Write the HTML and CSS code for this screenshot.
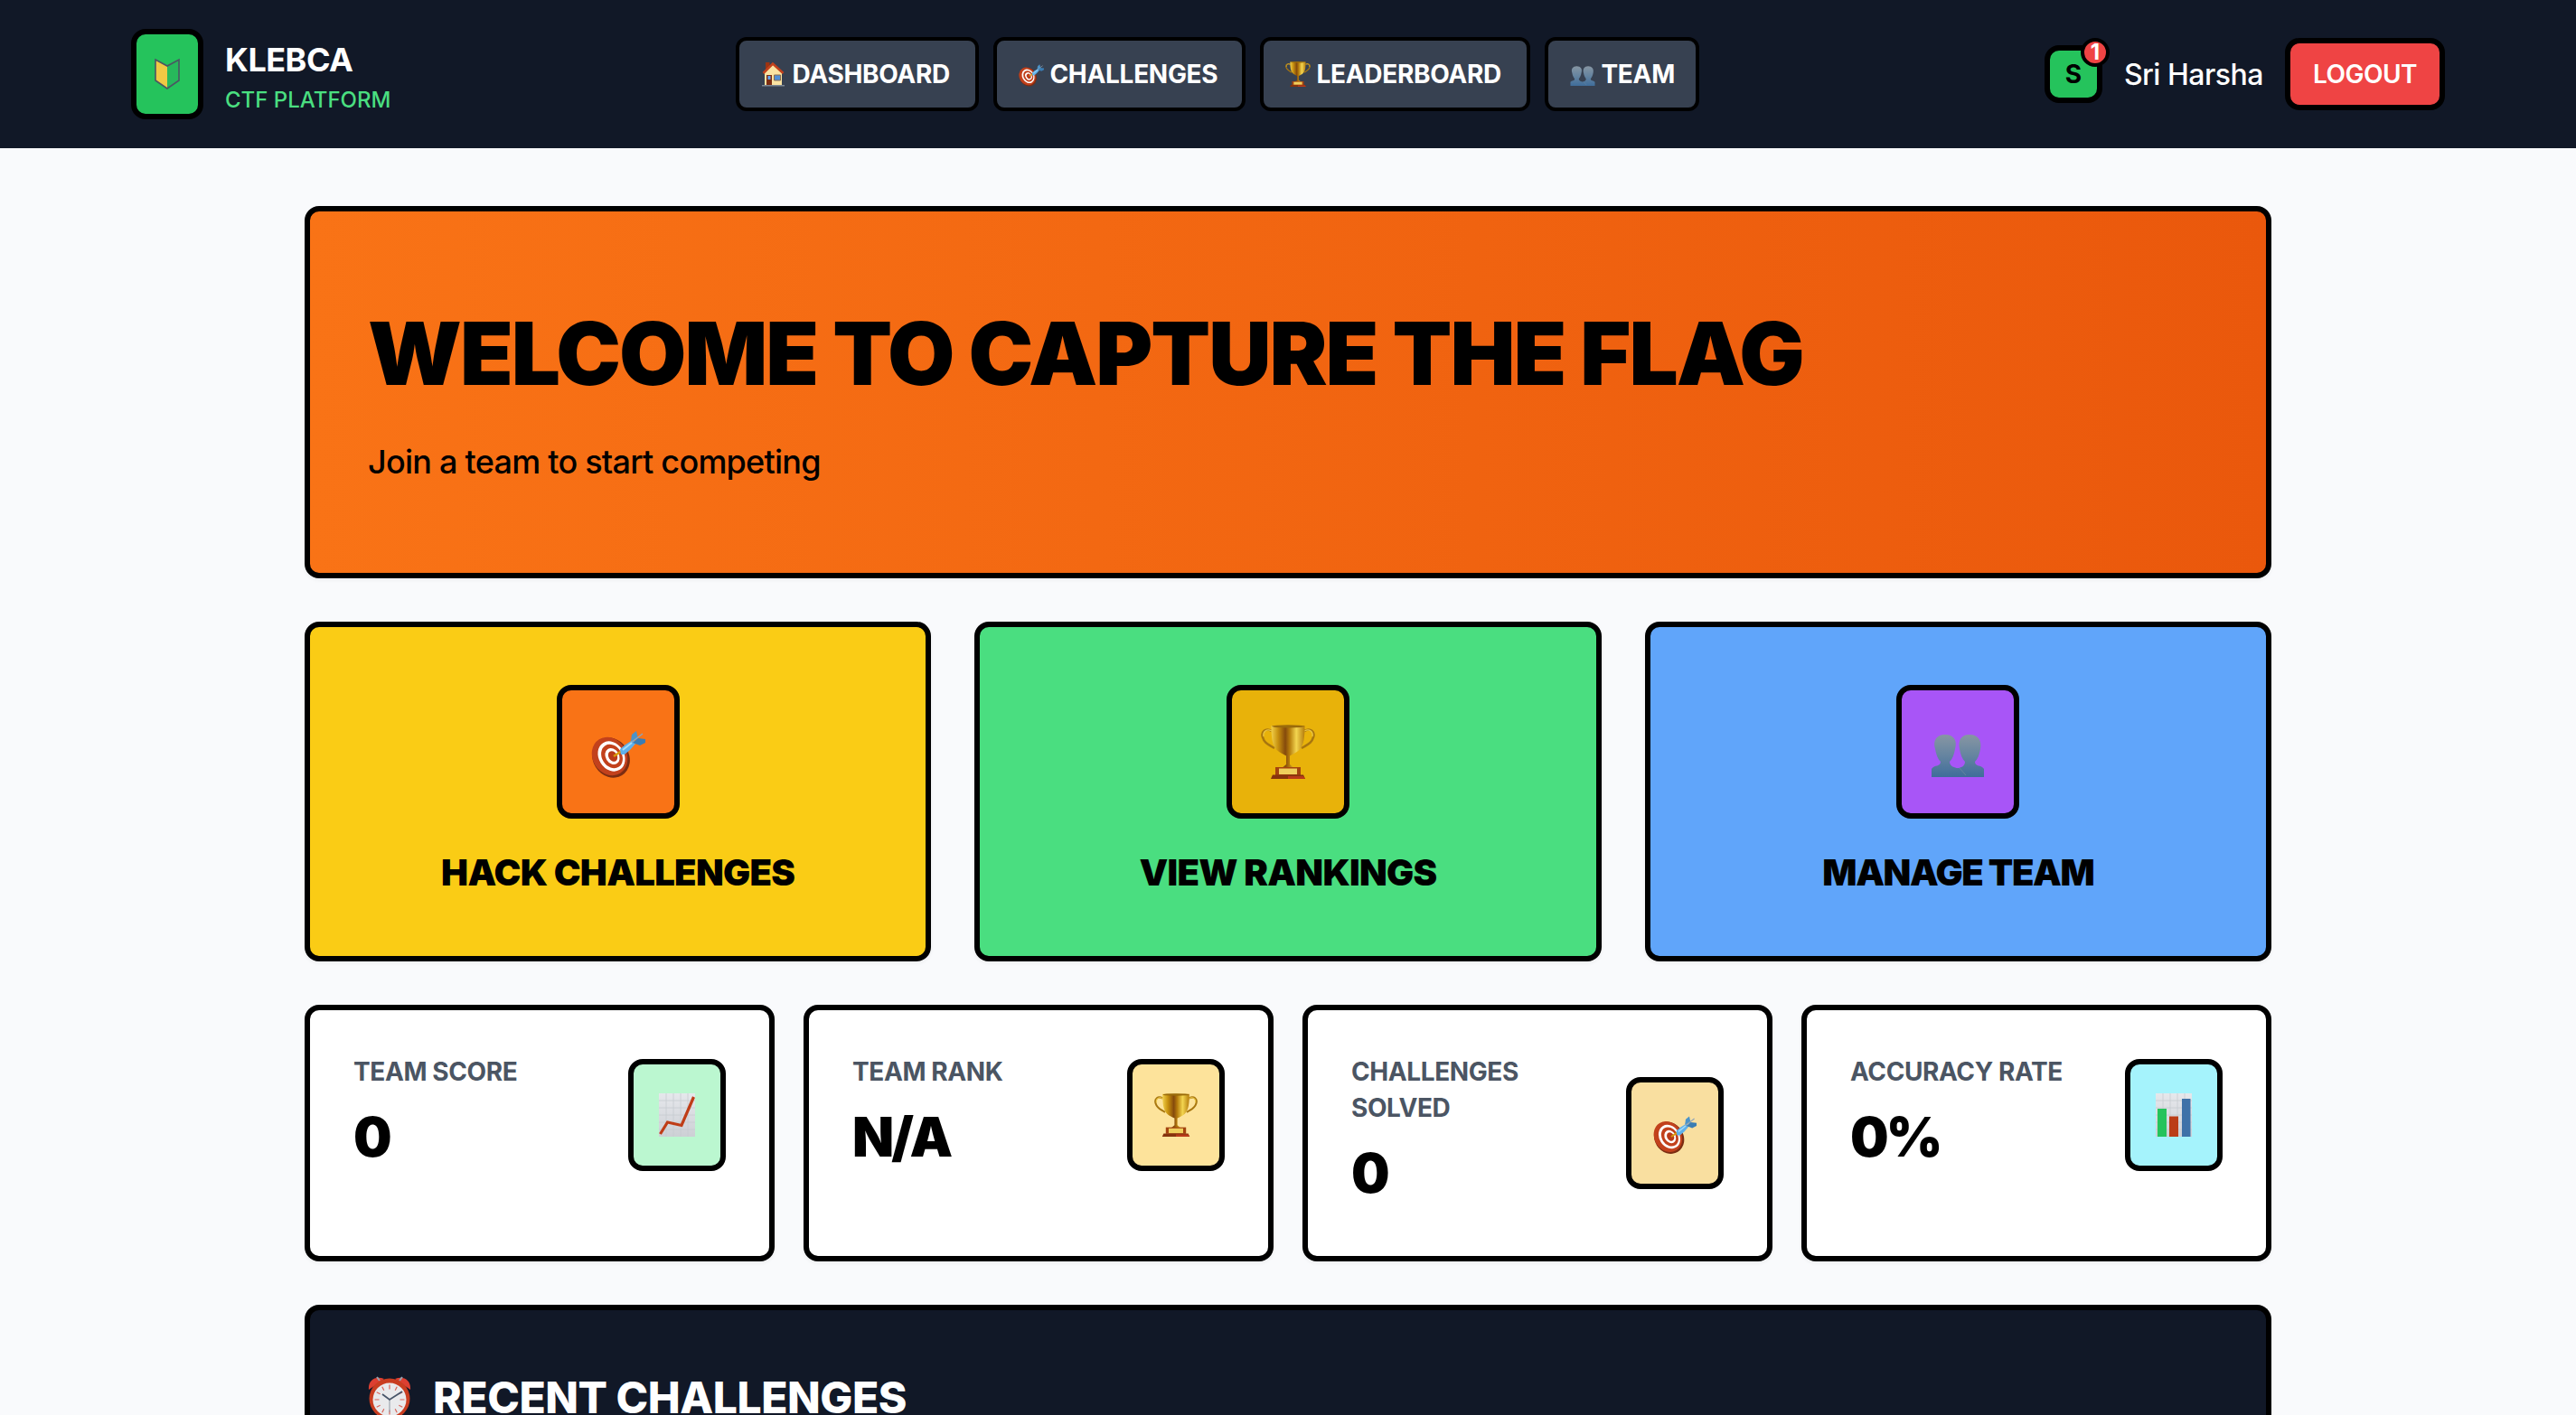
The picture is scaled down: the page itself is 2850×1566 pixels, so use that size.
FILE: index.html
```html
<!DOCTYPE html>
<html lang="en">
<head>
  <meta charset="UTF-8" />
  <meta name="viewport" content="width=device-width, initial-scale=1.0"/>
  <title>KLEBCA CTF Platform</title>
  <link rel="stylesheet" href="styles.css">
</head>
<body>

  <!-- shared icons -->
  <svg class="sprite" width="0" height="0">
    <defs>
      <linearGradient id="gold" x1="0" x2="1" y1="0" y2="0">
        <stop offset="0" stop-color="#f0cf4a"/>
        <stop offset="0.2" stop-color="#c8920f"/>
        <stop offset="0.42" stop-color="#854a0c"/>
        <stop offset="0.55" stop-color="#b57c0c"/>
        <stop offset="0.75" stop-color="#f3d550"/>
        <stop offset="1" stop-color="#b57c0c"/>
      </linearGradient>
      <linearGradient id="steel" x1="0" x2="0" y1="0" y2="1">
        <stop offset="0" stop-color="#8796a3"/>
        <stop offset="0.5" stop-color="#6584a0"/>
        <stop offset="1" stop-color="#3f6d9b"/>
      </linearGradient>
      <linearGradient id="paper" x1="0" x2="0" y1="0" y2="1">
        <stop offset="0" stop-color="#e6e8ec"/>
        <stop offset="1" stop-color="#cdd0d5"/>
      </linearGradient>
    </defs>

    <symbol id="target" viewBox="0 0 60 60">
      <ellipse cx="22" cy="36.500" rx="20" ry="23" transform="rotate(-32 22 36.500)" fill="#7c2d12"/>
      <ellipse cx="20.500" cy="35" rx="18.800" ry="22" transform="rotate(-32 20.500 35)" fill="#c2411c"/>
      <ellipse cx="22.500" cy="35" rx="14" ry="17.500" transform="rotate(-32 22.500 35)" fill="#fff"/>
      <ellipse cx="23" cy="35" rx="11" ry="14" transform="rotate(-32 23 35)" fill="#c2411c"/>
      <ellipse cx="23.500" cy="35" rx="7.500" ry="9.500" transform="rotate(-32 23.500 35)" fill="#fff"/>
      <ellipse cx="24" cy="35" rx="4.700" ry="6.200" transform="rotate(-32 24 35)" fill="#b93a1a"/>
      <path d="M25 35l9-6" stroke="#d99a0b" stroke-width="2.500"/>
      <path d="M32 27l6-5 8-5 4 3-7 8-6 5-4 0z" fill="#5fb0ea"/>
      <path d="M44 18l1-7 5-4 2 9z" fill="#4a93c9"/>
      <path d="M46 20l6-5 8 1 0 4-6 3z" fill="#3b7db3"/>
      <path d="M44 20L57 10" stroke="#8ea4b8" stroke-width="1.500"/>
      <path d="M35 28l10-8" stroke="#a5dcf8" stroke-width="1.800"/>
    </symbol>

    <symbol id="trophy" viewBox="0 0 60 60">
      <path d="M12 7C5 3 0 8 2 14c2 7 7 8 13 12M48 7c7-4 12 1 10 7-2 7-7 8-13 12" fill="none" stroke="#a8760f" stroke-width="2.600"/>
      <path d="M12 7C6 4 2 8 3 13M48 7c6-3 10 1 9 6" fill="none" stroke="#ecc846" stroke-width="1.300"/>
      <path d="M11.500 1h37c0 13-1 22-6 27-3 3-8 5-10.500 6.500V44l5 4H23l5-4v-9.500C25.500 33 20.500 31 17.500 28c-5-5-6-14-6-27z" fill="url(#gold)"/>
      <ellipse cx="30" cy="1.800" rx="18" ry="1.600" fill="#9a6b0b"/>
      <path d="M16 47h28v9H16z" fill="#a4430f"/>
      <path d="M20 48.500h20v6.500H20z" fill="#efcf5c"/>
      <path d="M13 55.500h34l2 4.500H11z" fill="#86330d"/>
      <path d="M30 57h17l2 3H30z" fill="#b93a1a"/>
    </symbol>

    <symbol id="people" viewBox="0 0 60 60">
      <path d="M1 58V49c3-5 10-2 10-8-3-3-5-8-6-14C2 17 7 11 16 11s14 6 11 16c-1 6-3 11-6 14 0 5 6 7 9 7s8-2 8-7c-3-3-5-8-6-14-2-10 2-16 11-16s14 6 12 16c-1 6-3 11-6 14 0 6 7 3 10 8v9z" fill="url(#steel)"/>
      <path d="M32 48l7 8" stroke="#6584a0" stroke-width="1"/>
    </symbol>

    <symbol id="beginner" viewBox="0 0 28 36">
      <path d="M1 2l13 7v25L1 25z" fill="#f0c944"/>
      <path d="M27 2L14 9v25l13-9z" fill="#27b85b"/>
      <path d="M1 2l13 7 13-7v23l-13 9-13-9z" fill="none" stroke="#4b5563" stroke-width="1.600"/>
    </symbol>

    <symbol id="house" viewBox="0 0 26 28">
      <path d="M4 1h4.500v7H4z" fill="#9c3412"/>
      <path d="M3 12L12 3l10 9v15H3z" fill="#fae3a2"/>
      <path d="M1.500 13L12 2.500 23.500 13" fill="none" stroke="#c2411c" stroke-width="2.600"/>
      <path d="M5 15h6v11H5z" fill="#7c2d12"/>
      <path d="M6.500 16h3v4h-3z" fill="#60a5fa"/>
      <path d="M13.500 15h7v6h-7z" fill="#4f8fd6" stroke="#8a6b4c" stroke-width="1"/>
      <path d="M0 26h25v1.500H0z" fill="#7c8794"/>
    </symbol>

    <symbol id="growth" viewBox="0 0 40 48">
      <path d="M0 0h40v48H0z" fill="url(#paper)"/>
      <path d="M0 8h40M0 16h40M0 24h40M0 32h40M0 40h40M8 0v48M16 0v48M24 0v48M32 0v48" stroke="#c7cbd1" stroke-width="0.800"/>
      <path d="M1.500 45L9.500 32 25 35.500 38.500 4" fill="none" stroke="#bf3d17" stroke-width="3.200"/>
    </symbol>

    <symbol id="bars" viewBox="0 0 40 48">
      <path d="M0 0h40v48H0z" fill="url(#paper)"/>
      <path d="M0 8h40M0 16h40M0 24h40M0 32h40M0 40h40M8 0v48M16 0v48M24 0v48M32 0v48" stroke="#c7cbd1" stroke-width="0.800"/>
      <path d="M2 17h10v31H2z" fill="#25c35c"/>
      <path d="M15 25.500h10V48H15z" fill="#bb3d17"/>
      <path d="M29 6h9.500v42H29z" fill="#3e71a8"/>
    </symbol>

    <symbol id="clock" viewBox="0 0 48 48">
      <path d="M9 47l4-6M39 47l-4-6" stroke="#9ca3af" stroke-width="3"/>
      <path d="M1 15C0 5 8-1 18 3zM47 15C48 5 40-1 30 3z" fill="#dc3f31"/>
      <path d="M10 1l3 4M38 1l-3 4" stroke="#9ca3af" stroke-width="2"/>
      <circle cx="24" cy="25" r="22.500" fill="#c93d20"/>
      <circle cx="24" cy="26" r="18.500" fill="#e9eaec"/>
      <path d="M24 9.500v5M24 37.500v5M7.500 26h5M35.500 26h5M15.800 11.700l2 4M32.200 11.700l-2 4M15.800 40.300l2-4M32.200 40.300l-2-4M9.700 17.800l4 2M38.300 17.800l-4 2M9.700 34.200l4-2M38.300 34.200l-4-2" stroke="#d9655a" stroke-width="1.200"/>
      <path d="M24 26v14" stroke="#9ca3af" stroke-width="1.200"/>
      <path d="M16 20l8 6 14-9" fill="none" stroke="#475569" stroke-width="1.800"/>
    </symbol>
  </svg>

  <header class="header">
    <div class="brand">
      <div class="brand-logo"><svg class="logo-icon"><use href="#beginner"/></svg></div>
      <div class="brand-text">
        <div class="brand-name">KLEBCA</div>
        <div class="brand-sub">CTF PLATFORM</div>
      </div>
    </div>

    <nav class="nav">
      <a class="nav-link dashboard"><svg class="nav-icon"><use href="#house"/></svg>DASHBOARD</a>
      <a class="nav-link challenges"><svg class="nav-icon"><use href="#target"/></svg>CHALLENGES</a>
      <a class="nav-link leaderboard"><svg class="nav-icon"><use href="#trophy"/></svg>LEADERBOARD</a>
      <a class="nav-link team"><svg class="nav-icon"><use href="#people"/></svg>TEAM</a>
    </nav>

    <div class="user">
      <div class="avatar">S<span class="badge">1</span></div>
      <span class="user-name">Sri Harsha</span>
      <button class="logout">LOGOUT</button>
    </div>
  </header>

  <main class="main">
    <section class="hero">
      <h1>WELCOME TO CAPTURE THE FLAG</h1>
      <p>Join a team to start competing</p>
    </section>

    <section class="actions">
      <a class="action yellow">
        <div class="action-icon orange"><svg><use href="#target"/></svg></div>
        <h2>HACK CHALLENGES</h2>
      </a>
      <a class="action green">
        <div class="action-icon gold"><svg><use href="#trophy"/></svg></div>
        <h2>VIEW RANKINGS</h2>
      </a>
      <a class="action blue">
        <div class="action-icon purple"><svg><use href="#people"/></svg></div>
        <h2>MANAGE TEAM</h2>
      </a>
    </section>

    <section class="stats">
      <div class="stat">
        <div>
          <div class="stat-label">TEAM SCORE</div>
          <div class="stat-value">0</div>
        </div>
        <div class="stat-icon mint"><svg><use href="#growth"/></svg></div>
      </div>
      <div class="stat">
        <div>
          <div class="stat-label">TEAM RANK</div>
          <div class="stat-value">N/A</div>
        </div>
        <div class="stat-icon cream"><svg><use href="#trophy"/></svg></div>
      </div>
      <div class="stat">
        <div>
          <div class="stat-label">CHALLENGES SOLVED</div>
          <div class="stat-value">0</div>
        </div>
        <div class="stat-icon peach"><svg><use href="#target"/></svg></div>
      </div>
      <div class="stat">
        <div>
          <div class="stat-label">ACCURACY RATE</div>
          <div class="stat-value">0%</div>
        </div>
        <div class="stat-icon cyan"><svg><use href="#bars"/></svg></div>
      </div>
    </section>

    <section class="recent">
      <h2><svg class="clock"><use href="#clock"/></svg>RECENT CHALLENGES</h2>
    </section>
  </main>

</body>
</html>
```
FILE: styles.css
```css
* {
  box-sizing: border-box;
  margin: 0;
  padding: 0;
}
body {
  font-family: Inter, "Liberation Sans", sans-serif;
  background: #f9fafc;
  color: #000;
  height: 1566px;
  overflow: hidden;
}
svg {
  display: block;
  flex-shrink: 0;
}
.sprite {
  position: absolute;
}

/* header */
.header {
  display: flex;
  align-items: center;
  justify-content: space-between;
  height: 164px;
  padding: 0 145px;
  background: #111827;
  color: #fff;
}
.brand {
  display: flex;
  align-items: center;
  gap: 24px;
}
.brand-logo {
  display: flex;
  align-items: center;
  justify-content: center;
  width: 80px;
  height: 100px;
  border: 6px solid #000;
  border-radius: 16px;
  background: #25c35c;
}
.logo-icon {
  width: 28px;
  height: 36px;
}
.brand-text {
  width: 184px;
  padding-top: 8px;
}
.brand-name {
  font-size: 36px;
  font-weight: 700;
  line-height: 50px;
  letter-spacing: -0.5px;
}
.brand-sub {
  font-size: 24px;
  font-weight: 500;
  line-height: 40px;
  color: #4ade80;
}
.nav {
  display: flex;
  gap: 16px;
}
.nav-link {
  display: flex;
  align-items: center;
  gap: 6px;
  height: 82px;
  padding: 0 24px;
  border: 4px solid #000;
  border-radius: 12px;
  background: #374151;
  font-size: 28px;
  font-weight: 700;
  letter-spacing: -0.3px;
  white-space: nowrap;
}
.nav-link.dashboard {
  width: 269px;
}
.nav-link.challenges {
  width: 279px;
}
.nav-link.leaderboard {
  width: 299px;
}
.nav-link.team {
  width: 171px;
}
.nav-icon {
  width: 28px;
  height: 28px;
}
.user {
  display: flex;
  align-items: center;
  gap: 24px;
}
.avatar {
  position: relative;
  display: flex;
  align-items: center;
  justify-content: center;
  width: 64px;
  height: 64px;
  border: 6px solid #000;
  border-radius: 16px;
  background: #25c35c;
  color: #000;
  font-size: 28px;
  font-weight: 700;
}
.badge {
  position: absolute;
  top: -14px;
  right: -14px;
  width: 32px;
  height: 32px;
  border: 4px solid #000;
  border-radius: 50%;
  background: #ef4444;
  color: #fff;
  font-size: 24px;
  line-height: 24px;
  text-align: center;
}
.user-name {
  font-size: 32px;
  font-weight: 500;
  letter-spacing: -0.5px;
}
.logout {
  width: 177px;
  height: 80px;
  border: 6px solid #000;
  border-radius: 16px;
  background: #ef4444;
  color: #fff;
  font-family: inherit;
  font-size: 28px;
  font-weight: 600;
  letter-spacing: -0.5px;
}

/* page */
.main {
  display: flex;
  flex-direction: column;
  gap: 48px;
  width: 2176px;
  margin: 64px auto 0;
}
.hero,
.action,
.stat,
.recent {
  border: 6px solid #000;
  border-radius: 16px;
  box-shadow: 0 2px 4px rgba(0, 0, 0, 0.05);
}
.hero {
  padding: 97px 64px 95px;
  background: linear-gradient(to right, #f97316, #ea580c);
}
.hero h1 {
  margin-bottom: 32px;
  font-size: 96px;
  font-weight: 900;
  line-height: 120px;
  letter-spacing: -2px;
}
.hero p {
  font-size: 36px;
  font-weight: 500;
  line-height: 56px;
  letter-spacing: -0.75px;
}

.actions {
  display: grid;
  grid-template-columns: repeat(3, 1fr);
  gap: 48px;
}
.action {
  display: flex;
  flex-direction: column;
  align-items: center;
  gap: 32px;
  padding: 64px;
}
.action h2 {
  font-size: 40px;
  font-weight: 900;
  line-height: 56px;
  letter-spacing: -0.7px;
}
.action-icon {
  display: flex;
  align-items: center;
  justify-content: center;
  width: 136px;
  height: 148px;
  border: 6px solid #000;
  border-radius: 16px;
}
.action-icon svg {
  width: 60px;
  height: 60px;
}
.yellow {
  background: #facc15;
}
.green {
  background: #4ade80;
}
.blue {
  background: #60a5fa;
}
.blue h2 {
  letter-spacing: -1.4px;
}
.orange {
  background: #f97316;
}
.gold {
  background: #e8b20a;
}
.purple {
  background: #a855f7;
}

.stats {
  display: grid;
  grid-template-columns: repeat(4, 1fr);
  gap: 32px;
}
.stat {
  display: flex;
  align-items: flex-start;
  justify-content: space-between;
  height: 284px;
  padding: 48px;
  background: #fff;
}
.stat-label {
  max-width: 240px;
  font-size: 28px;
  font-weight: 700;
  line-height: 40px;
  letter-spacing: -0.4px;
  color: #4b5563;
}
.stat-value {
  margin-top: 16px;
  font-size: 60px;
  font-weight: 900;
  line-height: 72px;
  letter-spacing: -3px;
}
.stat-icon {
  display: flex;
  align-items: center;
  justify-content: center;
  width: 108px;
  height: 124px;
  margin-top: 6px;
  border: 6px solid #000;
  border-radius: 16px;
}
.stat-icon svg {
  width: 48px;
  height: 48px;
}
.mint {
  background: #bbf7d0;
}
.cream {
  background: #fde39b;
}
.peach {
  margin-top: 26px;
  background: #f9dfa0;
}
.cyan {
  background: #a5f3fc;
}

.recent {
  height: 122px;
  padding: 64px 64px 0;
  border-bottom: 0;
  border-radius: 16px 16px 0 0;
  background: #111827;
  color: #fff;
}
.recent h2 {
  display: flex;
  align-items: center;
  gap: 24px;
  font-size: 48px;
  font-weight: 800;
  line-height: 66px;
  letter-spacing: -0.45px;
}
.clock {
  width: 48px;
  height: 48px;
}
```
